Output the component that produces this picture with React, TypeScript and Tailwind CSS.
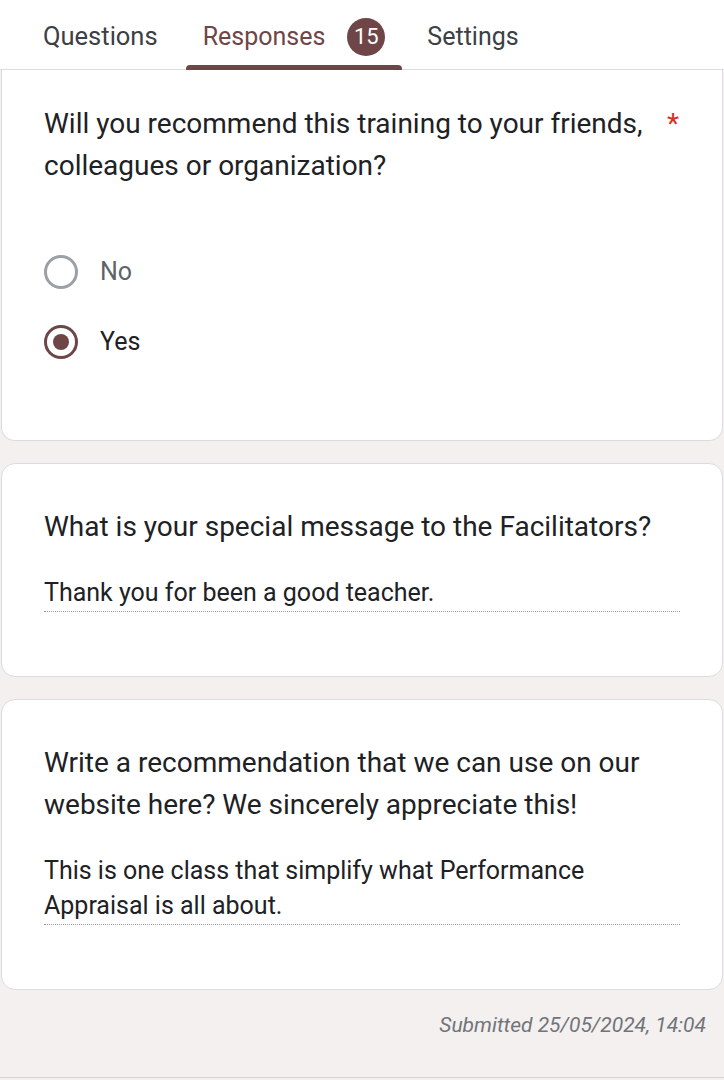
import React from "react";

const brown = "#6e4647";

function Radio({ checked, label }: { checked: boolean; label: string }) {
    return (
        <div className="flex h-[70px] items-center">
            <div
                className={
                    checked
                        ? "flex h-[34px] w-[34px] items-center justify-center rounded-full border-[3px] border-[#6e4647]"
                        : "h-[34px] w-[34px] rounded-full border-[3px] border-[#9aa0a6]"
                }
            >
                {checked && <div className="h-[16px] w-[16px] rounded-full bg-[#6e4647]" />}
            </div>
            <span className={checked ? "ml-[22px] text-[25px] text-[#202124]" : "ml-[22px] text-[25px] text-[#5f6368]"}>
                {label}
            </span>
        </div>
    );
}

function Answer({ children }: { children: React.ReactNode }) {
    return (
        <div className="mt-[27px] border-b border-dotted border-[#9aa0a6] pb-[1px] text-[25px] leading-[35px] text-[#202124]">
            {children}
        </div>
    );
}

export default function App() {
    return (
        <div className="flex h-[1080px] flex-col overflow-hidden bg-[#f4f0ef]" style={{ fontFamily: "Roboto, 'Noto Sans', sans-serif" }}>
            {/* tabs */}
            <div className="flex h-[70px] shrink-0 items-stretch border-b border-[#dadce0] bg-white pl-[43px]">
                <div className="flex items-center pr-[28px] pt-[4px] text-[25.5px] text-[#3c4043]">Questions</div>
                <div className="relative flex items-center px-[17px] pt-[4px]">
                    <span className="text-[25px]" style={{ color: brown }}>Responses</span>
                    <span className="ml-[22px] flex h-[38px] w-[38px] items-center justify-center rounded-full bg-[#6e4647] text-[22px] text-white">
                        15
                    </span>
                    <div className="absolute bottom-[-1px] left-0 right-0 h-[5px] rounded-t-[4px] bg-[#6e4647]" />
                </div>
                <div className="flex items-center pl-[25px] pt-[4px] text-[25px] text-[#3c4043]">Settings</div>
            </div>

            {/* card 1 */}
            <div className="mx-[1px] rounded-b-[14px] border border-t-0 border-[#dadce0] bg-white px-[42px] pb-[63px] pt-[33px]">
                <div className="flex">
                    <div className="flex-1 text-[28px] leading-[42px] text-[#202124]">
                        Will you recommend this training to your friends, colleagues or organization?
                    </div>
                    <div className="ml-[18px] mr-[1px] text-[28px] leading-[42px] text-[#d93025]">*</div>
                </div>
                <div className="mt-[50px]">
                    <Radio checked={false} label="No" />
                    <Radio checked={true} label="Yes" />
                </div>
            </div>

            {/* card 2 */}
            <div className="mx-[1px] mt-[22px] rounded-[14px] border border-[#dadce0] bg-white px-[42px] pb-[64px] pt-[42px]">
                <div className="text-[28px] leading-[42px] text-[#202124]">What is your special message to the Facilitators?</div>
                <Answer>Thank you for been a good teacher.</Answer>
            </div>

            {/* card 3 */}
            <div className="mx-[1px] mt-[22px] rounded-[14px] border border-[#dadce0] bg-white px-[42px] pb-[64px] pt-[42px]">
                <div className="text-[28px] leading-[42px] text-[#202124]">
                    Write a recommendation that we can use on our website here? We sincerely appreciate this!
                </div>
                <Answer>This is one class that simplify what Performance Appraisal is all about.</Answer>
            </div>

            <div className="flex justify-end pr-[18px] pt-[20px] text-[21px] italic text-[#70757a]">Submitted 25/05/2024, 14:04</div>
            <div className="flex-1" />
            <div className="mb-[2px] h-[1px] bg-[#d6d2d1]" />
        </div>
    );
}
